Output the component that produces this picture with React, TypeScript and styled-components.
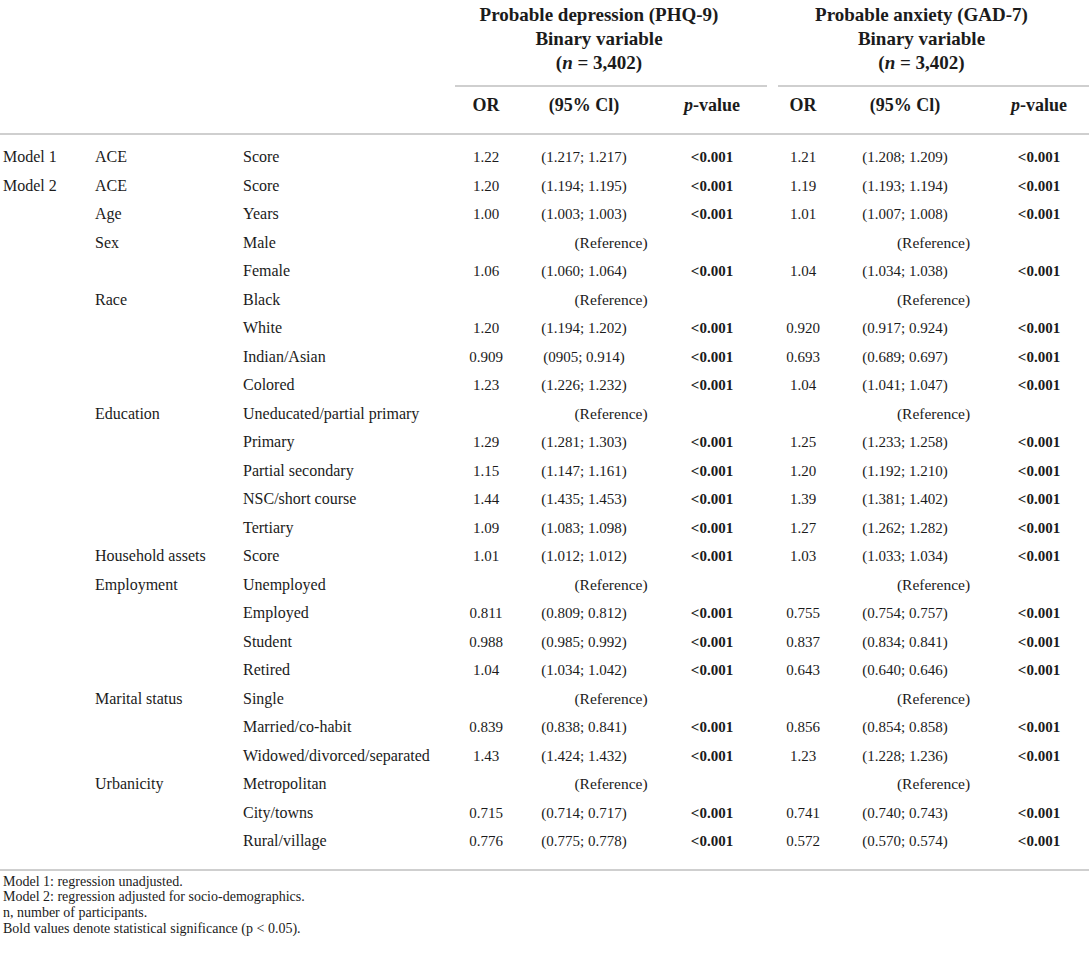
import React from "react";
import styled, { createGlobalStyle } from "styled-components";

const GlobalStyle = createGlobalStyle`
  html, body {
    margin: 0;
    padding: 0;
    background: #ffffff;
  }
  body {
    font-family: "Liberation Serif", "Times New Roman", serif;
    color: #1b1b1b;
  }
`;

const COLUMNS = "92px 148px 215px 62px 134px 116px 11px 50px 154px 107px";
const RULE = "#cfcfcf";

const Page = styled.div`
  width: 1089px;
  font-family: "Liberation Serif", "Times New Roman", serif;
  color: #1b1b1b;
`;

const Header = styled.div`
  border-bottom: 2px solid ${RULE};
`;

const HeaderRow = styled.div<{ $height?: number }>`
  display: grid;
  grid-template-columns: ${COLUMNS};
  ${(p) => (p.$height ? `height: ${p.$height}px;` : "")}
  align-items: center;
  font-weight: 700;
  font-size: 18px;
`;

const GroupTitle = styled.div<{ $col: number }>`
  grid-column: ${(p) => p.$col} / span 3;
  text-align: center;
  font-size: 19px;
  line-height: 24px;
  padding-top: 3px;
  padding-right: 24px;
  padding-bottom: 10px;
  border-bottom: 2px solid ${RULE};
  white-space: nowrap;
`;

const SubHead = styled.div<{ $col: number; $pad?: number }>`
  grid-column: ${(p) => p.$col};
  text-align: center;
  padding-left: ${(p) => p.$pad ?? 0}px;
  padding-bottom: 9px;
  white-space: nowrap;
`;

const Body = styled.div`
  padding: 8px 0 13px;
  border-bottom: 2px solid ${RULE};
`;

const Row = styled.div`
  display: grid;
  grid-template-columns: ${COLUMNS};
  height: 28.5px;
  line-height: 28.5px;
`;

const Label = styled.div<{ $col: number }>`
  grid-column: ${(p) => p.$col};
  padding-left: 3px;
  font-size: 16px;
  white-space: nowrap;
`;

const Num = styled.div<{ $col: number; $pad?: number; $bold?: boolean }>`
  grid-column: ${(p) => p.$col};
  text-align: center;
  padding-left: ${(p) => p.$pad ?? 0}px;
  font-size: 15px;
  font-weight: ${(p) => (p.$bold ? 700 : 400)};
  white-space: nowrap;
`;

const RefCell = styled.div<{ $col: number }>`
  grid-column: ${(p) => p.$col} / span 3;
  text-align: center;
  font-size: 15.5px;
  white-space: nowrap;
`;

const Footer = styled.div`
  padding-top: 3px;
  font-size: 14px;
  line-height: 15.8px;
`;

const FootLine = styled.div`
  padding-left: 3px;
`;

type Stat = [string, string] | null;
type DataRow = {
  model?: string;
  cat?: string;
  level: string;
  a: Stat;
  b: Stat;
};

const rows: DataRow[] = [
  { model: "Model 1", cat: "ACE", level: "Score", a: ["1.22", "(1.217; 1.217)"], b: ["1.21", "(1.208; 1.209)"] },
  { model: "Model 2", cat: "ACE", level: "Score", a: ["1.20", "(1.194; 1.195)"], b: ["1.19", "(1.193; 1.194)"] },
  { cat: "Age", level: "Years", a: ["1.00", "(1.003; 1.003)"], b: ["1.01", "(1.007; 1.008)"] },
  { cat: "Sex", level: "Male", a: null, b: null },
  { level: "Female", a: ["1.06", "(1.060; 1.064)"], b: ["1.04", "(1.034; 1.038)"] },
  { cat: "Race", level: "Black", a: null, b: null },
  { level: "White", a: ["1.20", "(1.194; 1.202)"], b: ["0.920", "(0.917; 0.924)"] },
  { level: "Indian/Asian", a: ["0.909", "(0905; 0.914)"], b: ["0.693", "(0.689; 0.697)"] },
  { level: "Colored", a: ["1.23", "(1.226; 1.232)"], b: ["1.04", "(1.041; 1.047)"] },
  { cat: "Education", level: "Uneducated/partial primary", a: null, b: null },
  { level: "Primary", a: ["1.29", "(1.281; 1.303)"], b: ["1.25", "(1.233; 1.258)"] },
  { level: "Partial secondary", a: ["1.15", "(1.147; 1.161)"], b: ["1.20", "(1.192; 1.210)"] },
  { level: "NSC/short course", a: ["1.44", "(1.435; 1.453)"], b: ["1.39", "(1.381; 1.402)"] },
  { level: "Tertiary", a: ["1.09", "(1.083; 1.098)"], b: ["1.27", "(1.262; 1.282)"] },
  { cat: "Household assets", level: "Score", a: ["1.01", "(1.012; 1.012)"], b: ["1.03", "(1.033; 1.034)"] },
  { cat: "Employment", level: "Unemployed", a: null, b: null },
  { level: "Employed", a: ["0.811", "(0.809; 0.812)"], b: ["0.755", "(0.754; 0.757)"] },
  { level: "Student", a: ["0.988", "(0.985; 0.992)"], b: ["0.837", "(0.834; 0.841)"] },
  { level: "Retired", a: ["1.04", "(1.034; 1.042)"], b: ["0.643", "(0.640; 0.646)"] },
  { cat: "Marital status", level: "Single", a: null, b: null },
  { level: "Married/co-habit", a: ["0.839", "(0.838; 0.841)"], b: ["0.856", "(0.854; 0.858)"] },
  { level: "Widowed/divorced/separated", a: ["1.43", "(1.424; 1.432)"], b: ["1.23", "(1.228; 1.236)"] },
  { cat: "Urbanicity", level: "Metropolitan", a: null, b: null },
  { level: "City/towns", a: ["0.715", "(0.714; 0.717)"], b: ["0.741", "(0.740; 0.743)"] },
  { level: "Rural/village", a: ["0.776", "(0.775; 0.778)"], b: ["0.572", "(0.570; 0.574)"] },
];

const StatCells: React.FC<{ stat: Stat; start: number; pPad: number }> = ({ stat, start, pPad }) => {
  if (!stat) return <RefCell $col={start}>(Reference)</RefCell>;
  return (
    <>
      <Num $col={start}>{stat[0]}</Num>
      <Num $col={start + 1}>{stat[1]}</Num>
      <Num $col={start + 2} $pad={pPad} $bold>
        &lt;0.001
      </Num>
    </>
  );
};

const GroupHead: React.FC<{ col: number; title: string }> = ({ col, title }) => (
  <GroupTitle $col={col}>
    <div>{title}</div>
    <div>Binary variable</div>
    <div>
      (<i>n</i> = 3,402)
    </div>
  </GroupTitle>
);

export default function App() {
  return (
    <Page>
      <GlobalStyle />
      <Header>
        <HeaderRow>
          <GroupHead col={4} title="Probable depression (PHQ-9)" />
          <GroupHead col={8} title="Probable anxiety (GAD-7)" />
        </HeaderRow>
        <HeaderRow $height={46}>
          <SubHead $col={4}>OR</SubHead>
          <SubHead $col={5}>(95% Cl)</SubHead>
          <SubHead $col={6} $pad={6}>
            <i>p</i>-value
          </SubHead>
          <SubHead $col={8}>OR</SubHead>
          <SubHead $col={9}>(95% Cl)</SubHead>
          <SubHead $col={10} $pad={7}>
            <i>p</i>-value
          </SubHead>
        </HeaderRow>
      </Header>
      <Body>
        {rows.map((r, i) => (
          <Row key={i}>
            <Label $col={1}>{r.model ?? ""}</Label>
            <Label $col={2}>{r.cat ?? ""}</Label>
            <Label $col={3}>{r.level}</Label>
            <StatCells stat={r.a} start={4} pPad={6} />
            <StatCells stat={r.b} start={8} pPad={7} />
          </Row>
        ))}
      </Body>
      <Footer>
        <FootLine>Model 1: regression unadjusted.</FootLine>
        <FootLine>Model 2: regression adjusted for socio-demographics.</FootLine>
        <FootLine>n, number of participants.</FootLine>
        <FootLine>Bold values denote statistical significance (p &lt; 0.05).</FootLine>
      </Footer>
    </Page>
  );
}
